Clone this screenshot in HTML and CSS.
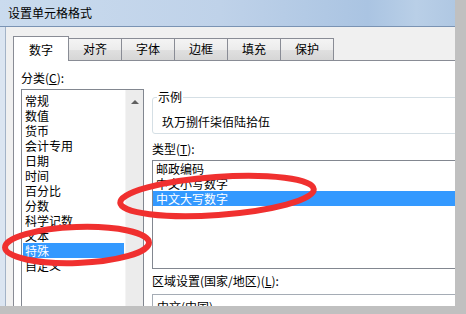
FILE: index.html
```html
<!DOCTYPE html>
<html lang="zh">
  <head>
    <meta charset="UTF-8" />
    <meta name="viewport" content="width=device-width, initial-scale=1.0" />
    <title>设置单元格格式</title>
    <link rel="stylesheet" href="styles.css">
  </head>
  <body>
    <div class="screen">
      <div class="window">
        <div class="dialog">
          <div class="titlebar">设置单元格格式</div>
          <div class="frame">
            <div class="client">
              <div class="tabs">
                <div class="tab active">数字</div>
                <div class="tab">对齐</div>
                <div class="tab">字体</div>
                <div class="tab">边框</div>
                <div class="tab">填充</div>
                <div class="tab">保护</div>
              </div>
              <div class="panel">
                <div class="col-left">
                  <div class="label">分类(<u>C</u>):</div>
                  <div class="listbox category">
                    <ul class="items">
                      <li>常规</li>
                      <li>数值</li>
                      <li>货币</li>
                      <li>会计专用</li>
                      <li>日期</li>
                      <li>时间</li>
                      <li>百分比</li>
                      <li>分数</li>
                      <li>科学记数</li>
                      <li>文本</li>
                      <li class="selected">特殊</li>
                      <li>自定义</li>
                    </ul>
                    <div class="scrollbar"><span class="arrow-up"></span></div>
                  </div>
                </div>
                <div class="col-right">
                  <fieldset class="sample">
                    <legend>示例</legend>
                    <div class="sample-text">玖万捌仟柒佰陆拾伍</div>
                  </fieldset>
                  <div class="label type-label">类型(<u>T</u>):</div>
                  <ul class="listbox type">
                    <li>邮政编码</li>
                    <li>中文小写数字</li>
                    <li class="selected">中文大写数字</li>
                  </ul>
                  <div class="label locale-label">区域设置(国家/地区)(<u>L</u>):</div>
                  <div class="select">中文(中国)</div>
                </div>
              </div>
            </div>
          </div>
        </div>
      </div>

      <!-- 红色标注圈 -->
      <svg class="marks" width="466" height="314" viewBox="0 0 466 314">
        <ellipse cx="77" cy="245" rx="72" ry="18" transform="rotate(-2 77 245)" />
        <ellipse cx="217" cy="196" rx="97" ry="19" transform="rotate(-4 217 196)" />
      </svg>
    </div>
  </body>
</html>
```

FILE: styles.css
```css
* {
  box-sizing: border-box;
}

body {
  margin: 0;
  background: #c0c0c0;
  font-family: "Noto Sans CJK SC", "Liberation Sans", sans-serif;
  font-size: 12px;
  color: #000000;
}

.screen {
  position: relative;
  width: 466px;
  height: 314px;
  overflow: hidden;
  background: #c0c0c0;
}

.window {
  width: 455px;
  height: 306px;
  overflow: hidden;
}

.dialog {
  width: 490px;
  height: 340px;
  display: flex;
  flex-direction: column;
}

.titlebar {
  height: 27px;
  padding-left: 8px;
  line-height: 26px;
  border-bottom: 1px solid #7a93b3;
  background: linear-gradient(
    to right,
    #cadbee 0%,
    #bfd2e9 45%,
    #aac4e2 75%,
    #b9cfe7 85%,
    #a7c1df 100%
  );
}

.frame {
  flex: 1;
  display: flex;
  padding-left: 5px;
  background: #dbe5f1;
}

.client {
  flex: 1;
  display: flex;
  flex-direction: column;
  padding: 9px 0 0 7px;
  border-left: 1px solid #a3b3c7;
  background: #f0f0f0;
}

.tabs {
  display: flex;
  height: 25px;
  margin-bottom: -1px;
}

.tab {
  height: 22px;
  margin-top: 2px;
  margin-left: -1px;
  padding: 2px 14px 0;
  line-height: 16px;
  border: 1px solid #898c95;
  border-bottom: none;
  background: linear-gradient(#f4f4f4 0%, #ececec 50%, #e0e0e0 51%, #d6d6d6 100%);
}

.tab.active {
  position: relative;
  z-index: 1;
  height: 25px;
  margin-top: 0;
  margin-left: 0;
  padding: 5px 15px 0;
  background: #ffffff;
}

.panel {
  flex: 1;
  display: flex;
  padding: 9px 0 0 7px;
  border: 1px solid #898c95;
  background: #ffffff;
}

.label {
  height: 16px;
  line-height: 16px;
}

.col-left {
  width: 123px;
}

.listbox {
  margin: 3px 0 0;
  padding: 0;
  list-style: none;
  border: 1px solid #828790;
  background: #ffffff;
}

.listbox li {
  height: 15px;
  line-height: 15px;
  white-space: nowrap;
}

.listbox li.selected {
  background: #3399ff;
  color: #ffffff;
}

.category {
  display: flex;
  height: 230px;
}

.items {
  flex: 1;
  margin: 0;
  padding: 3px 1px 0;
  list-style: none;
}

.items li {
  padding-left: 2px;
}

.scrollbar {
  width: 18px;
  padding-top: 10px;
  display: flex;
  justify-content: center;
  background: #ececec;
  border-left: 1px solid #f4f4f4;
}

.arrow-up {
  width: 0;
  height: 0;
  border-left: 4px solid transparent;
  border-right: 4px solid transparent;
  border-bottom: 4px solid #5f5f5f;
}

.col-right {
  flex: 1;
  margin-left: 8px;
  padding-top: 20px;
  padding-right: 8px;
}

.sample {
  margin: 0;
  height: 44px;
  padding: 11px 9px 4px;
  border: 1px solid #d5dfe5;
  border-radius: 3px;
}

.sample legend {
  margin-left: -5px;
  padding: 0 1px;
  line-height: 14px;
}

.sample-text {
  line-height: 14px;
}

.type-label {
  margin-top: 7px;
  line-height: 15px;
}

.type {
  height: 109px;
}

.type li {
  padding-left: 3px;
}

.locale-label {
  margin-top: 4px;
  line-height: 15px;
}

.select {
  height: 24px;
  margin-top: 5px;
  padding: 4px 0 0 4px;
  line-height: 15px;
  border: 1px solid #a5acb5;
}

.marks {
  position: absolute;
  top: 0;
  left: 0;
  pointer-events: none;
}

.marks ellipse {
  fill: none;
  stroke: #f0302f;
  stroke-width: 6;
}
```
